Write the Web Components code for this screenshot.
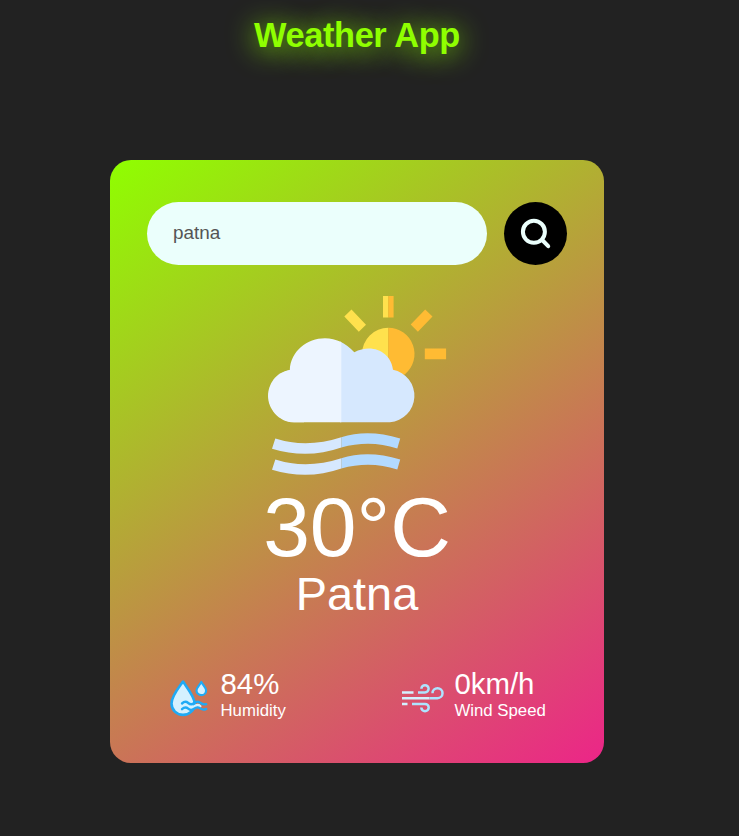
<!DOCTYPE html>
<html lang="en">
<head>
<meta charset="utf-8">
<title>Weather App</title>
<style>
html,body{margin:0;background:#222;font-family:"Liberation Sans",Arial,sans-serif}
</style>
</head>
<body>
<weather-app></weather-app>
<script>
const define=(name,html)=>customElements.define(name,class extends HTMLElement{
  constructor(){super();this.attachShadow({mode:"open"}).innerHTML=html}
});
define("app-title",`<style>
:host{display:block;text-align:center}
h1{margin:0;font-size:34.4px;letter-spacing:-.4px;line-height:40px;color:#8fff00;text-shadow:0 3px 28px #8fff00}
</style><h1><slot></slot></h1>`);
define("search-bar",`<style>
:host{display:flex;justify-content:space-between;align-items:center}
input{box-sizing:border-box;width:340px;height:63px;border:0;outline:0;border-radius:32px;background:#ebfffc;color:#555;padding:0 26px 2px;font:18.9px "Liberation Sans",Arial,sans-serif}
button{width:63px;height:63px;border:0;border-radius:50%;background:#000;padding:0;display:block}
svg{display:block}
</style><input value="patna" spellcheck="false"><button aria-label="Search"><svg width="63" height="63" viewBox="0 0 63 63" fill="none" stroke="#ebfffc" stroke-width="4" stroke-linecap="round"><circle cx="29.9" cy="29.800" r="11"/><path d="M38.2 38 44.2 44.200"/></svg></button>`);
define("weather-picture",`<style>:host{display:block;width:179px;height:179px}svg{display:block}</style>
<svg width="179" height="179" viewBox="268 296 179 179">
<path fill="#ffe14d" d="M383 296h5.3v21.5H383zM351.5 309.5 366 324.7 358.800 331.700 344.300 316.600zM388.300 327.700A26.300 26.300 0 0 0 362 354l10 20h16.300z"/>
<path fill="#ffbb33" d="M388.300 296h5.300v21.500h-5.300zM425.200 309.500 432.500 316.600 417.900 331.700 410.700 324.500zM424.800 348.600h21.300v10.700h-21.300zM388.300 327.700a26.300 26.300 0 0 1 16.500 46.700l-16.500 3z"/>
<path fill="#d6e8fe" d="M340 341.500Q347.500 345 354.300 352.300C372 343 391 352 393 369.700A26.600 26.600 0 0 1 390 422.300h-50z"/>
<path fill="#edf5ff" d="M341.300 342.100C319 331 291 345 289.800 369.900A26.500 26.500 0 0 0 294 422.300h47.300z"/>
<path fill="#edf5ff" d="M289.800 369.900C276 372 268 384 268 396S278 422.300 294 422.300h10v-52.400z"/>
<path fill="#d6e8fe" d="M275.300 438.500Q307 448.500 341.300 437.200v10.300Q307 459.500 272 448.700zM275.300 459.500Q307 469.500 341.300 458.200v10.300Q307 480.500 272 469.700z"/>
<path fill="#b3daff" d="M341.300 437.200Q368 428.500 400.200 438.400L397.300 448.500Q370 439.500 341.300 447.500zM341.300 458.200Q368 449.500 400.200 459.400L397.300 469.500Q370 460.500 341.300 468.500z"/>
</svg>`);
define("weather-stat",`<style>
:host{display:flex;align-items:center;gap:10.500px;color:#fff}
.v{font-size:29.4px;line-height:33px}.l{font-size:16.8px;line-height:21px}
</style><slot name="icon"></slot><div><div class="v"><slot name="value"></slot></div><div class="l"><slot></slot></div></div>`);
define("humidity-icon",`<style>:host{display:block;padding-top:7px}svg{display:block}</style>
<svg width="42" height="42" viewBox="168.500 677 42 42" stroke="#1faaf5" stroke-width="2.600" stroke-linejoin="round" stroke-linecap="round">
<path fill="#d4f1ff" d="M183.500 681.500C179 688 172 696 172 703.500A11.400 11.400 0 0 0 183.600 714.900C190 714.900 195.200 710 195.200 703.500 195.200 697 188.500 689 183.500 681.500z"/>
<path fill="none" stroke="#d4f1ff" stroke-width="3" d="M185 706.200q2.500-2 5 0t5.500 0 5 0"/>
<path fill="#d4f1ff" stroke-width="2.200" d="M201.800 682C199.800 685.500 197 688 197 690.400a4.800 4.800 0 0 0 9.600 0C206.600 688 203.800 685.500 201.800 682z"/>
<path fill="none" stroke-width="2.400" d="M182.500 703.500q3.200-3 6.200-.5t6 0 6-.3 6 1.500M182.500 709.200q3.200-3 6.200-.5t6 0 6-.3 6 .500"/>
</svg>`);
define("wind-icon",`<style>:host{display:block;padding-top:8px}svg{display:block}</style>
<svg width="42" height="42" viewBox="402.500 677 42 42" fill="none" stroke="#aee4ff" stroke-width="2.500">
<path stroke="#d4f1ff" d="M402.500 698.200H430M402.500 692.400h11.500M402.500 703.900h5.500"/>
<path d="M430 698.200h8a5 5 0 1 0-5-5M418.500 692.400h7a3.600 3.600 0 1 0-3.600-3.600M412.500 703.900h13a3.700 3.700 0 1 1-3.700 3.700"/>
</svg>`);
define("weather-card",`<style>
:host{box-sizing:border-box;display:flex;flex-direction:column;align-items:center;width:494px;height:603px;padding:42px 37px;border-radius:21px;background:linear-gradient(145deg,#8fff00,#ec2588);color:#fff}
search-bar{align-self:stretch}
weather-picture{margin-top:31px}
.temp{font-size:84px;line-height:84px;margin-top:10px}
.city{font-size:46.900px;line-height:50px}
.details{box-sizing:border-box;align-self:stretch;display:flex;justify-content:space-between;padding:0 21.200px 0 21px;margin-top:48px}
</style>
<search-bar></search-bar><weather-picture></weather-picture>
<div class="temp">30°C</div><div class="city">Patna</div>
<div class="details">
<weather-stat><humidity-icon slot="icon"></humidity-icon><span slot="value">84%</span>Humidity</weather-stat>
<weather-stat><wind-icon slot="icon"></wind-icon><span slot="value">0km/h</span>Wind Speed</weather-stat>
</div>`);
define("weather-app",`<style>
:host{box-sizing:border-box;display:flex;flex-direction:column;align-items:center;width:714px;height:836px;padding-top:15px}
app-title{margin-bottom:105px}
</style><app-title>Weather App</app-title><weather-card></weather-card>`);
</script>
</body>
</html>
